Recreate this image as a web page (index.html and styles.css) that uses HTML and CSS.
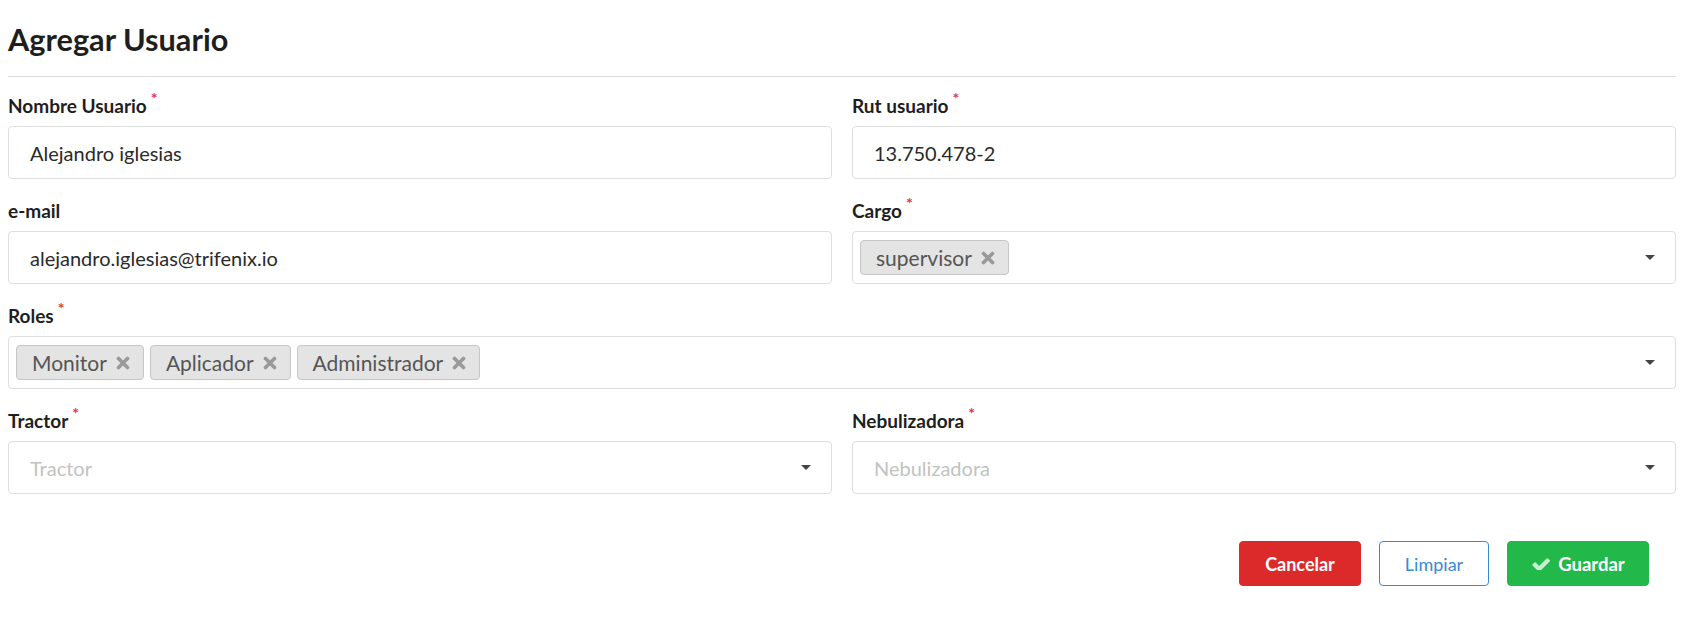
FILE: index.html
```html
<!DOCTYPE html>
<html lang="es">
<head>
<meta charset="utf-8">
<title>Agregar Usuario</title>
<link rel="stylesheet" href="styles.css">
</head>
<body>
<div class="page">
  <h1 class="title">Agregar Usuario</h1>
  <hr class="divider">
  <form class="form">
    <div class="field">
      <label class="label">Nombre Usuario<span class="req">*</span></label>
      <div class="input">Alejandro iglesias</div>
    </div>
    <div class="field">
      <label class="label">Rut usuario<span class="req">*</span></label>
      <div class="input">13.750.478-2</div>
    </div>
    <div class="field">
      <label class="label">e-mail</label>
      <div class="input">alejandro.iglesias@trifenix.io</div>
    </div>
    <div class="field">
      <label class="label">Cargo<span class="req">*</span></label>
      <div class="select multi">
        <div class="tags">
          <span class="tag">supervisor<svg class="tag-x" viewBox="0 0 14 14" width="14" height="14"><path d="M2.5 2.5 L11.5 11.5 M11.5 2.5 L2.5 11.5" stroke="currentColor" stroke-width="3.6" stroke-linecap="round"/></svg></span>
        </div>
        <span class="caret"></span>
      </div>
    </div>
    <div class="field full">
      <label class="label">Roles<span class="req">*</span></label>
      <div class="select multi">
        <div class="tags">
          <span class="tag">Monitor<svg class="tag-x" viewBox="0 0 14 14" width="14" height="14"><path d="M2.5 2.5 L11.5 11.5 M11.5 2.5 L2.5 11.5" stroke="currentColor" stroke-width="3.6" stroke-linecap="round"/></svg></span>
          <span class="tag">Aplicador<svg class="tag-x" viewBox="0 0 14 14" width="14" height="14"><path d="M2.5 2.5 L11.5 11.5 M11.5 2.5 L2.5 11.5" stroke="currentColor" stroke-width="3.6" stroke-linecap="round"/></svg></span>
          <span class="tag">Administrador<svg class="tag-x" viewBox="0 0 14 14" width="14" height="14"><path d="M2.5 2.5 L11.5 11.5 M11.5 2.5 L2.5 11.5" stroke="currentColor" stroke-width="3.6" stroke-linecap="round"/></svg></span>
        </div>
        <span class="caret"></span>
      </div>
    </div>
    <div class="field">
      <label class="label">Tractor<span class="req">*</span></label>
      <div class="select single">
        <span class="placeholder">Tractor</span>
        <span class="caret"></span>
      </div>
    </div>
    <div class="field">
      <label class="label">Nebulizadora<span class="req">*</span></label>
      <div class="select single">
        <span class="placeholder">Nebulizadora</span>
        <span class="caret"></span>
      </div>
    </div>
  </form>
  <div class="actions">
    <button class="btn btn-danger" type="button">Cancelar</button>
    <button class="btn btn-outline" type="button">Limpiar</button>
    <button class="btn btn-success" type="button">
      <svg class="check" viewBox="0 320 1671 1050" width="19" height="12"><path d="M1671 566q0 40-28 68l-724 724-136 136q-28 28-68 28t-68-28l-136-136-362-362q-28-28-28-68t28-68l136-136q28-28 68-28t68 28l294 295 656-657q28-28 68-28t68 28l136 136q28 28 28 68z" fill="currentColor"/></svg>
      Guardar
    </button>
  </div>
</div>
</body>
</html>
```

FILE: styles.css
```css
* { box-sizing: border-box; }
html, body { margin: 0; padding: 0; background: #fff; }
body {
  font-family: Lato, "Noto Sans", sans-serif;
  color: #222;
}
.page {
  padding: 0 11px 0 8px;
}
.title {
  margin: 0;
  padding-top: 20px;
  font-size: 30.7px;
  line-height: 40px;
  font-weight: 700;
  color: #1e1e1e;
}
.divider {
  margin: 16px 0 0 0;
  border: 0;
  border-top: 1px solid #dcdcdc;
  height: 0;
}
.form {
  display: grid;
  grid-template-columns: 1fr 1fr;
  column-gap: 20px;
  row-gap: 21px;
  padding-top: 18px;
}
.field.full { grid-column: 1 / span 2; }
.label {
  display: block;
  font-size: 19px;
  line-height: 22px;
  font-weight: 700;
  color: #1e1e1e;
  margin-bottom: 9px;
}
.req {
  color: #e5353c;
  font-size: 16px;
  vertical-align: top;
  position: relative;
  top: -8px;
  margin-left: 4px;
  font-weight: 700;
}
.input, .select {
  height: 53px;
  border: 1px solid #dedede;
  border-radius: 4px;
  background: #fff;
}
.input {
  display: flex;
  align-items: center;
  padding-left: 21px;
  font-size: 20px;
  color: #2a2a2a;
}
.select {
  display: flex;
  align-items: center;
  justify-content: space-between;
  padding-right: 20px;
}
.select.multi { padding-left: 7px; }
.select.single { padding-left: 21px; }
.tags {
  display: flex;
  gap: 6px;
}
.tag {
  display: inline-flex;
  align-items: center;
  height: 35px;
  padding: 0 13px 0 15px;
  background: #e4e4e4;
  border: 1px solid #c6c6c6;
  border-radius: 4px;
  font-size: 21px;
  color: #555;
}
.tag-x {
  margin-left: 9px;
  color: #999;
  display: block;
}
.placeholder {
  font-size: 20px;
  color: #c2c2c2;
}
.caret {
  width: 0;
  height: 0;
  border-left: 5px solid transparent;
  border-right: 5px solid transparent;
  border-top: 5px solid #444;
}
.actions {
  display: flex;
  justify-content: flex-end;
  gap: 18px;
  padding-top: 47px;
  padding-right: 27px;
}
.btn {
  height: 45px;
  border-radius: 4px;
  font-family: Lato, "Noto Sans", sans-serif;
  font-size: 18px;
  font-weight: 700;
  display: inline-flex;
  align-items: center;
  justify-content: center;
  cursor: pointer;
}
.btn-danger {
  width: 122px;
  background: #dc2a2a;
  border: 1px solid #dc2a2a;
  color: #fff;
}
.btn-outline {
  width: 110px;
  background: #fff;
  border: 1px solid #3a8ad6;
  color: #3a8ad6;
  font-weight: 400;
}
.btn-success {
  width: 142px;
  background: #22b84a;
  border: 1px solid #22b84a;
  color: #fff;
  gap: 8px;
  font-size: 18.5px;
}
.check { color: #c9efd3; }
```
